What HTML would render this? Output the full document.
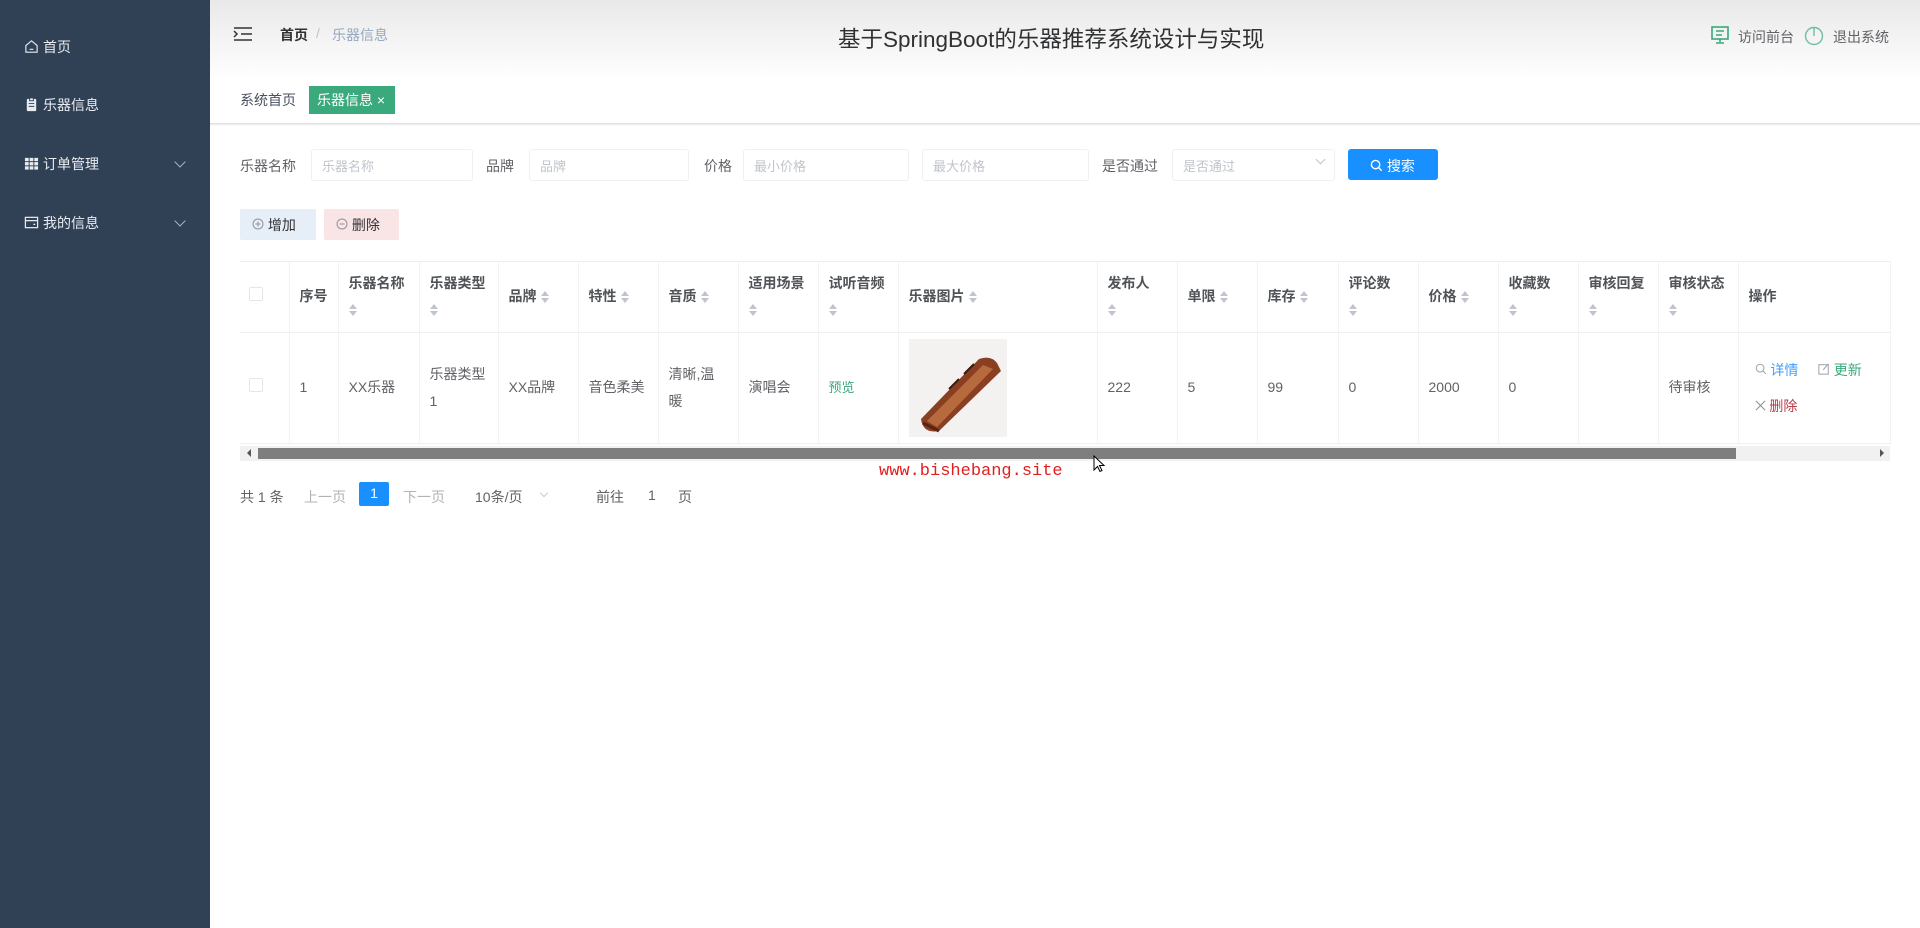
<!DOCTYPE html>
<html><head><meta charset="utf-8"><style>
*{margin:0;padding:0;box-sizing:border-box}
body{width:1920px;height:928px;position:relative;overflow:hidden;background:#fff;font-family:"Liberation Sans","Noto Sans CJK SC",sans-serif;font-size:14px;color:#606266}
.a{position:absolute;white-space:nowrap}
#side{position:absolute;left:0;top:0;width:210px;height:928px;background:#304156}
.mi{position:absolute;left:24px;color:#e8ecf1;font-size:14px}
.mi svg{vertical-align:-2px;margin-right:4px}
.chev{position:absolute;left:176px;width:8px;height:8px;border-right:1.3px solid #aab4c2;border-bottom:1.3px solid #aab4c2;transform:rotate(45deg)}
#hdr{position:absolute;left:210px;top:0;width:1710px;height:80px;background:linear-gradient(#e9e9e9,#fff)}
.inp{position:absolute;height:32px;border:1px solid #f0f0f0;border-radius:3px;color:#c0c4cc;font-size:13px;padding:6px 0 0 10px}
.lbl{position:absolute;color:#606266;font-size:14px}
table{border-collapse:collapse;table-layout:fixed;position:absolute;left:240px;top:261px}
td{border-right:1px solid #f3f3f3;border-bottom:1px solid #f0f0f0;padding:0 10px;font-size:14px;color:#606266;vertical-align:middle;line-height:27px;white-space:normal}
thead td{height:71px;color:#505357;font-weight:bold;line-height:26px}
tbody td{height:111px}
.s{display:inline-block;width:8px;height:14px;position:relative;vertical-align:-3px;margin-left:4px}
.s:before{content:"";position:absolute;left:0;top:1px;border:4px solid transparent;border-bottom:5px solid #c0c4cc;border-top:0}
.s:after{content:"";position:absolute;left:0;top:8px;border:4px solid transparent;border-top:5px solid #c0c4cc;border-bottom:0}
.cb{display:inline-block;width:14px;height:14px;border:1px solid #e4e6ea;border-radius:2px}
</style></head><body>
<div id="side">
 <div class="mi" style="top:37px"><svg width="15" height="15" viewBox="0 0 16 16" fill="none" stroke="#e8ecf1" stroke-width="1.2"><path d="M2 7L8 2l6 5v7H2z"/><path d="M6 11h4"/></svg>首页</div>
 <div class="mi" style="top:95px"><svg width="15" height="15" viewBox="0 0 16 16"><rect x="3" y="2" width="10" height="13" rx="1" fill="#e8ecf1"/><rect x="6" y="1" width="4" height="3" fill="#e8ecf1" stroke="#304156"/><path d="M5 7h6M5 10h6" stroke="#304156"/></svg>乐器信息</div>
 <div class="mi" style="top:154px"><svg width="15" height="15" viewBox="0 0 16 16" fill="#e8ecf1"><rect x="1" y="2" width="4" height="3.5"/><rect x="6" y="2" width="4" height="3.5"/><rect x="11" y="2" width="4" height="3.5"/><rect x="1" y="6.5" width="4" height="3.5"/><rect x="6" y="6.5" width="4" height="3.5"/><rect x="11" y="6.5" width="4" height="3.5"/><rect x="1" y="11" width="4" height="3.5"/><rect x="6" y="11" width="4" height="3.5"/><rect x="11" y="11" width="4" height="3.5"/></svg>订单管理</div>
 <div class="chev" style="top:158px"></div>
 <div class="mi" style="top:213px"><svg width="15" height="15" viewBox="0 0 16 16" fill="none" stroke="#e8ecf1" stroke-width="1.3"><rect x="1.5" y="2.5" width="13" height="11"/><path d="M1.5 6h13M10 10h2"/></svg>我的信息</div>
 <div class="chev" style="top:217px"></div>
</div>
<div id="hdr"></div>
<svg class="a" style="left:233px;top:26px" width="20" height="16" viewBox="0 0 20 16" fill="none" stroke="#333" stroke-width="1.5"><path d="M1 2h18M8 8h11M1 14h18M1 5l3 3-3 3"/></svg>
<div class="a" style="left:280px;top:25px;font-weight:bold;color:#303133">首页</div>
<div class="a" style="left:316px;top:25px;color:#c0c4cc">/</div>
<div class="a" style="left:332px;top:25px;color:#97a8be">乐器信息</div>
<div class="a" style="left:838px;top:22px;font-size:22.5px;color:#303133">基于SpringBoot的乐器推荐系统设计与实现</div>
<svg class="a" style="left:1710px;top:26px" width="20" height="18" viewBox="0 0 20 18" fill="none" stroke="#3aa97c" stroke-width="1.6"><rect x="2" y="1" width="16" height="12"/><path d="M6 5h8M6 9h6M10 13v3M6 17h8"/></svg>
<div class="a" style="left:1738px;top:27px;color:#606266">访问前台</div>
<svg class="a" style="left:1804px;top:24px" width="20" height="22" viewBox="0 0 20 22" fill="none" stroke="#3aa97c" stroke-width="1.4" opacity=".7"><circle cx="10" cy="12" r="8.5"/><path d="M10 3v9"/></svg>
<div class="a" style="left:1833px;top:27px;color:#606266">退出系统</div>
<div class="a" style="left:210px;top:123px;width:1710px;height:3px;background:linear-gradient(#ddd,#fff)"></div>
<div class="a" style="left:240px;top:90px;color:#495060;font-size:14px">系统首页</div>
<div class="a" style="left:309px;top:86px;width:86px;height:28px;background:#3aaa7d;color:#fff;padding:4px 0 0 8px;font-size:14px">乐器信息 ×</div>

<div class="lbl" style="left:240px;top:156px">乐器名称</div><div class="inp" style="left:311px;top:149px;width:162px">乐器名称</div>
<div class="lbl" style="left:486px;top:156px">品牌</div><div class="inp" style="left:529px;top:149px;width:160px">品牌</div>
<div class="lbl" style="left:704px;top:156px">价格</div><div class="inp" style="left:743px;top:149px;width:166px">最小价格</div>
<div class="inp" style="left:922px;top:149px;width:167px">最大价格</div>
<div class="lbl" style="left:1102px;top:156px">是否通过</div><div class="inp" style="left:1172px;top:149px;width:163px">是否通过<span style="position:absolute;left:144px;top:6px;width:7px;height:7px;border-right:1px solid #c0c4cc;border-bottom:1px solid #c0c4cc;transform:rotate(45deg)"></span></div>
<div class="a" style="left:1348px;top:149px;width:90px;height:31px;background:#1890ff;border-radius:3px;color:#fff;padding:7px 0 0 22px"><svg width="13" height="13" viewBox="0 0 14 14" fill="none" stroke="#fff" stroke-width="1.5" style="vertical-align:-1px"><circle cx="6" cy="6" r="4.5"/><path d="M9.5 9.5l3 3"/></svg> 搜索</div>
<div class="a" style="left:240px;top:209px;width:76px;height:31px;background:#e6eef8;border-radius:2px;color:#303133;padding:6px 0 0 12px"><svg width="12" height="12" viewBox="0 0 12 12" fill="none" stroke="#909399"><circle cx="6" cy="6" r="5"/><path d="M3.5 6h5M6 3.5v5"/></svg> 增加</div>
<div class="a" style="left:324px;top:209px;width:75px;height:31px;background:#fae5e6;border-radius:2px;color:#303133;padding:6px 0 0 12px"><svg width="12" height="12" viewBox="0 0 12 12" fill="none" stroke="#909399"><circle cx="6" cy="6" r="5"/><path d="M3.5 6h5"/></svg> 删除</div>

<div class="a" style="left:240px;top:261px;width:1650px;height:1px;background:#eee"></div>
<table>
<colgroup><col style="width:49px"><col style="width:49px"><col style="width:81px"><col style="width:79px"><col style="width:80px"><col style="width:80px"><col style="width:80px"><col style="width:80px"><col style="width:80px"><col style="width:199px"><col style="width:80px"><col style="width:80px"><col style="width:81px"><col style="width:80px"><col style="width:80px"><col style="width:80px"><col style="width:80px"><col style="width:80px"><col style="width:152px"></colgroup>
<thead><tr>
<td style="padding-left:9px"><span class="cb"></span></td><td>序号</td><td>乐器名称<br><span class="s" style="margin:0"></span></td><td>乐器类型<br><span class="s" style="margin:0"></span></td><td>品牌<span class="s"></span></td><td>特性<span class="s"></span></td><td>音质<span class="s"></span></td><td>适用场景<br><span class="s" style="margin:0"></span></td><td>试听音频<br><span class="s" style="margin:0"></span></td><td>乐器图片<span class="s"></span></td><td>发布人<br><span class="s" style="margin:0"></span></td><td>单限<span class="s"></span></td><td>库存<span class="s"></span></td><td>评论数<br><span class="s" style="margin:0"></span></td><td>价格<span class="s"></span></td><td>收藏数<br><span class="s" style="margin:0"></span></td><td>审核回复<br><span class="s" style="margin:0"></span></td><td>审核状态<br><span class="s" style="margin:0"></span></td><td>操作</td>
</tr></thead>
<tbody><tr>
<td style="padding-left:9px"><span class="cb"></span></td><td>1</td><td>XX乐器</td><td>乐器类型<br>1</td><td>XX品牌</td><td>音色柔美</td><td>清晰,温<br>暖</td><td>演唱会</td><td style="color:#3aa97c;font-size:13px">预览</td>
<td><svg width="98" height="98" viewBox="0 0 98 98" style="display:block"><rect width="98" height="98" fill="#f4f2f1"/><path d="M12 80 L70 20 Q82 16 88 24 L92 32 L30 92 Q14 95 12 80Z" fill="#8a3f22"/><path d="M18 82 L74 26 L84 30 L28 88Z" fill="#b86a3f"/><path d="M40 50 L50 40 M55 35 L65 25" stroke="#3a1a0e" stroke-width="2"/><path d="M14 84 L30 92" stroke="#5a2412" stroke-width="3"/></svg></td>
<td>222</td><td>5</td><td>99</td><td>0</td><td>2000</td><td>0</td><td></td><td>待审核</td>
<td style="line-height:36px;padding-left:16px"><span style="color:#409eff"><svg width="12" height="12" viewBox="0 0 14 14" fill="none" stroke="#a0a4ab" stroke-width="1.2"><circle cx="6" cy="6" r="4.5"/><path d="M9.5 9.5l3 3"/></svg> 详情</span>&nbsp;&nbsp;&nbsp;&nbsp;&nbsp;<span style="color:#3aa97c"><svg width="12" height="12" viewBox="0 0 14 14" fill="none" stroke="#a0a4ab" stroke-width="1.2"><rect x="1" y="2" width="11" height="11"/><path d="M6 8l6-7"/></svg> 更新</span><br><span style="color:#b83b4b"><svg width="11" height="11" viewBox="0 0 12 12" stroke="#909399" stroke-width="1.2"><path d="M1 1l10 10M11 1L1 11"/></svg> 删除</span></td>
</tr></tbody></table>
<div class="a" style="left:240px;top:446px;width:1650px;height:15px;background:#f1f1f1"></div>
<div class="a" style="left:258px;top:448px;width:1478px;height:11px;background:#7e7e7e"></div>
<div class="a" style="left:247px;top:449px;border:4px solid transparent;border-right:4px solid #555;border-left:0"></div>
<div class="a" style="left:1880px;top:449px;border:4px solid transparent;border-left:4px solid #555;border-right:0"></div>
<div class="a" style="left:879px;top:462px;color:#e02020;font-family:'Liberation Mono',monospace;font-size:17px">www.bishebang.site</div>
<svg class="a" style="left:1093px;top:455px" width="12" height="18" viewBox="0 0 12 18"><path d="M1 1v14l3.5-3.5 2.5 5 2-1-2.5-5H11z" fill="#fff" stroke="#000"/></svg>

<div class="a" style="left:240px;top:487px;color:#606266;font-size:14px">共 1 条</div>
<div class="a" style="left:304px;top:487px;color:#b0b3b8;font-size:14px">上一页</div>
<div class="a" style="left:359px;top:482px;width:30px;height:24px;background:#1890ff;color:#fff;text-align:center;padding-top:3px;border-radius:2px">1</div>
<div class="a" style="left:403px;top:487px;color:#b0b3b8;font-size:14px">下一页</div>
<div class="a" style="left:475px;top:487px;color:#606266;font-size:14px">10条/页</div>
<div class="a" style="left:541px;top:490px;width:6px;height:6px;border-right:1px solid #ccc;border-bottom:1px solid #ccc;transform:rotate(45deg)"></div>
<div class="a" style="left:596px;top:487px;color:#606266;font-size:14px">前往</div>
<div class="a" style="left:648px;top:487px;color:#606266;font-size:14px">1</div>
<div class="a" style="left:678px;top:487px;color:#606266;font-size:14px">页</div>
</body></html>
